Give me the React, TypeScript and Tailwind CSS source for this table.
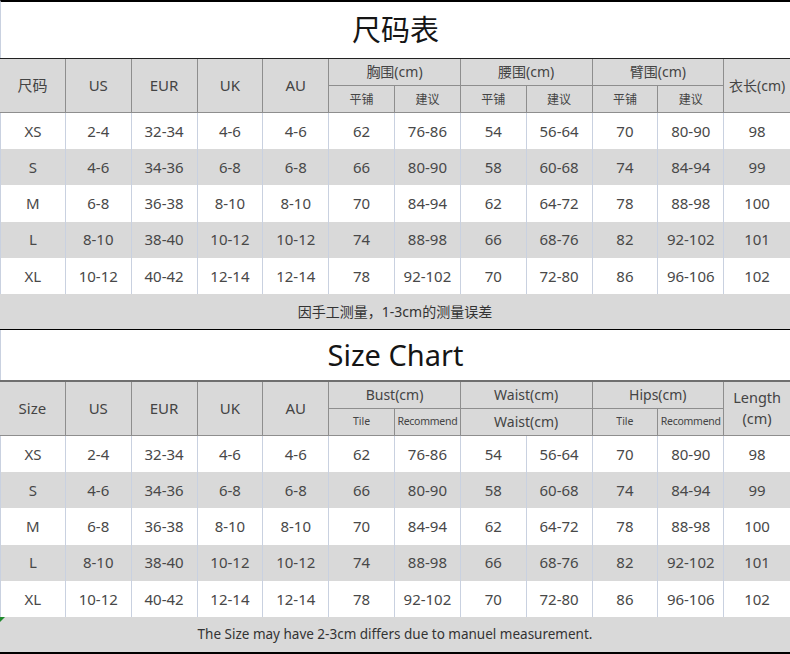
import React from 'react'

// --- Data ---
const rows = [
    ['XS', '2-4', '32-34', '4-6', '4-6', '62', '76-86', '54', '56-64', '70', '80-90', '98'],
    ['S', '4-6', '34-36', '6-8', '6-8', '66', '80-90', '58', '60-68', '74', '84-94', '99'],
    ['M', '6-8', '36-38', '8-10', '8-10', '70', '84-94', '62', '64-72', '78', '88-98', '100'],
    ['L', '8-10', '38-40', '10-12', '10-12', '74', '88-98', '66', '68-76', '82', '92-102', '101'],
    ['XL', '10-12', '40-42', '12-14', '12-14', '78', '92-102', '70', '72-80', '86', '96-106', '102'],
]

const font = 'font-["Noto_Sans","Noto_Sans_CJK_SC",sans-serif]'

// --- Header cell ---
function H({ children, className = '' }: { children: React.ReactNode, className?: string }) {
    return (
        <div className={`flex items-center justify-center text-center border-r border-b border-[#8e8e8e] bg-[#d9d9d9] text-[#444] leading-tight ${className}`}>
            {children}
        </div>
    )
}

// --- Data rows ---
function DataRows() {
    return (
        <>
            {rows.map((r, i) => (
                <div key={r[0]} className={`grid grid-cols-12 h-[36.2px] ${i % 2 === 1 ? 'bg-[#d9d9d9]' : 'bg-white'}`}>
                    {r.map((v, j) => (
                        <div
                            key={j}
                            className={`flex items-center justify-center text-[15px] text-[#484848] ${j < 11 ? 'border-r border-[#c9d1e0]' : ''} ${j === 0 ? 'border-l border-[#c9d1e0]' : ''}`}
                        >
                            {v}
                        </div>
                    ))}
                </div>
            ))}
        </>
    )
}

export default function App() {
    return (
        <div className={`w-[790px] h-[654px] bg-white overflow-hidden ${font}`}>
            {/* Chinese table */}
            <div className="h-[58px] border-t-2 border-black border-l border-l-[#c9d1e0] flex items-center justify-center text-[29px] text-[#151515]">
                尺码表
            </div>
            <div className="grid grid-cols-12 grid-rows-[27px_27px] border-t border-[#222]">
                <H className="row-span-2 text-[15px]">尺码</H>
                <H className="row-span-2 text-[15px]">US</H>
                <H className="row-span-2 text-[15px]">EUR</H>
                <H className="row-span-2 text-[15px]">UK</H>
                <H className="row-span-2 text-[15px]">AU</H>
                <H className="col-span-2 text-[14px]">胸围(cm)</H>
                <H className="col-span-2 text-[14px]">腰围(cm)</H>
                <H className="col-span-2 text-[14px]">臂围(cm)</H>
                <H className="row-span-2 text-[14px] border-r-0">衣长(cm)</H>
                <H className="text-[12px]">平铺</H>
                <H className="text-[12px]">建议</H>
                <H className="text-[12px]">平铺</H>
                <H className="text-[12px]">建议</H>
                <H className="text-[12px]">平铺</H>
                <H className="text-[12px]">建议</H>
            </div>
            <DataRows />
            <div className="h-[36px] bg-[#d9d9d9] border-b border-black flex items-center justify-center text-[14px] text-[#333]">
                因手工测量，1-3cm的测量误差
            </div>

            {/* English table */}
            <div className="h-[50px] border-l border-[#c9d1e0] flex items-center justify-center text-[29px] text-[#151515]">
                Size Chart
            </div>
            <div className="grid grid-cols-12 grid-rows-[27px_27px] border-t-2 border-[#6f6f6f]">
                <H className="row-span-2 text-[15px]">Size</H>
                <H className="row-span-2 text-[15px]">US</H>
                <H className="row-span-2 text-[15px]">EUR</H>
                <H className="row-span-2 text-[15px]">UK</H>
                <H className="row-span-2 text-[15px]">AU</H>
                <H className="col-span-2 text-[14px]">Bust(cm)</H>
                <H className="col-span-2 text-[14px]">Waist(cm)</H>
                <H className="col-span-2 text-[14px]">Hips(cm)</H>
                <H className="row-span-2 text-[14.5px] !leading-[21px] border-r-0">Length<br />(cm)</H>
                <H className="text-[10.5px]">Tile</H>
                <H className="text-[10.5px] tracking-tight">Recommend</H>
                <H className="col-span-2 text-[14px]">Waist(cm)</H>
                <H className="text-[10.5px]">Tile</H>
                <H className="text-[10.5px] tracking-tight">Recommend</H>
            </div>
            <DataRows />
            <div className="relative h-[37px] bg-[#d9d9d9] border-b-2 border-black flex items-center justify-center text-[13.5px] text-[#333]">
                {/* comment marker */}
                <svg className="absolute left-0 top-0" width="5" height="5" viewBox="0 0 5 5">
                    <polygon points="0,0 5,0 0,5" fill="#1f8a2c" />
                </svg>
                The Size may have 2-3cm differs due to manuel measurement.
            </div>
        </div>
    )
}
